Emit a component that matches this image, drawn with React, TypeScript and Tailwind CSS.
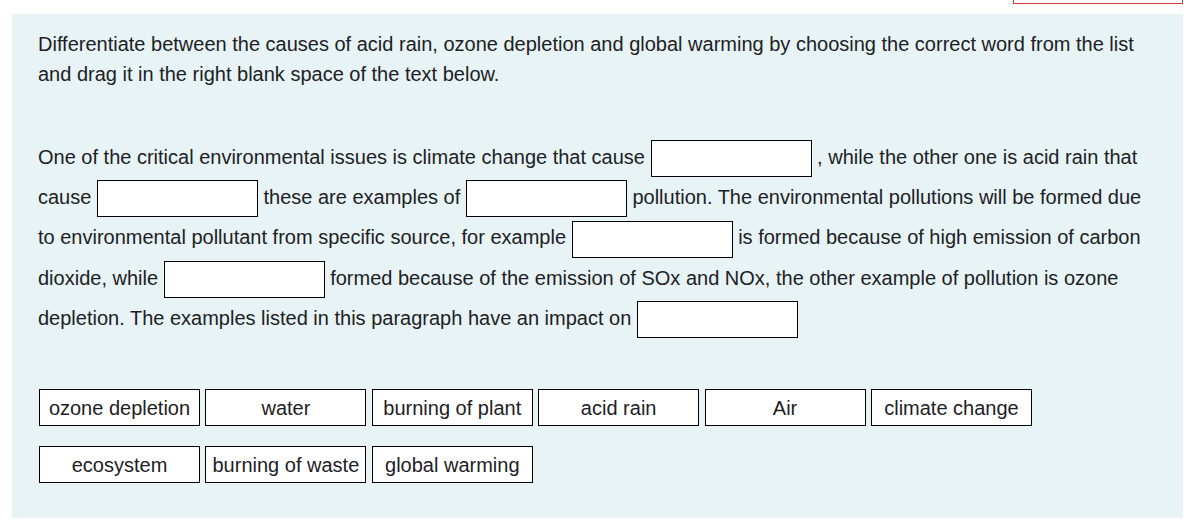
import React from "react";

const Blank = () => (
  <span className="inline-block w-[161px] h-[37px] border border-black bg-white align-middle" />
);

const Chip = ({ label }: { label: string }) => (
  <div className="w-[161px] h-[37px] border border-black bg-white flex items-center justify-center text-[20px] leading-none whitespace-nowrap">
    {label}
  </div>
);

export default function App() {
  return (
    <div
      className="w-[1197px] h-[525px] bg-white text-[#1d2125] overflow-hidden"
      style={{ fontFamily: '"Liberation Sans", Arial, sans-serif' }}
    >
      <div className="flex h-[4px]">
        <div className="ml-[1013px] w-[170px] h-[4px] border-x border-b border-[#cc3a2c]" />
      </div>
      <div className="mt-[10px] ml-[12px] w-[1171px] h-[504px] bg-[#e7f3f5] pl-[26px] pr-[10px] pt-[15px]">
        <p className="text-[20px] leading-[30px] whitespace-nowrap">
          Differentiate between the causes of acid rain, ozone depletion and global warming by choosing the correct word from the list
          <br />
          and drag it in the right blank space of the text below.
        </p>
        <p className="mt-[48px] text-[20px] leading-[40px] whitespace-nowrap">
          One of the critical environmental issues is climate change that cause <Blank /> , while the other one is acid rain that
          <br />
          cause <Blank /> these are examples of <Blank /> pollution. The environmental pollutions will be formed due
          <br />
          to environmental pollutant from specific source, for example <Blank /> is formed because of high emission of carbon
          <br />
          dioxide, while <Blank /> formed because of the emission of SOx and NOx, the other example of pollution is ozone
          <br />
          depletion. The examples listed in this paragraph have an impact on <Blank />
        </p>
        <div className="mt-[51px] ml-[1px] flex flex-wrap w-[1000px] gap-x-[5.4px] gap-y-[20px]">
          <Chip label="ozone depletion" />
          <Chip label="water" />
          <Chip label="burning of plant" />
          <Chip label="acid rain" />
          <Chip label="Air" />
          <Chip label="climate change" />
        </div>
        <div className="mt-[20px] ml-[1px] flex gap-x-[5.4px]">
          <Chip label="ecosystem" />
          <Chip label="burning of waste" />
          <Chip label="global warming" />
        </div>
      </div>
    </div>
  );
}
